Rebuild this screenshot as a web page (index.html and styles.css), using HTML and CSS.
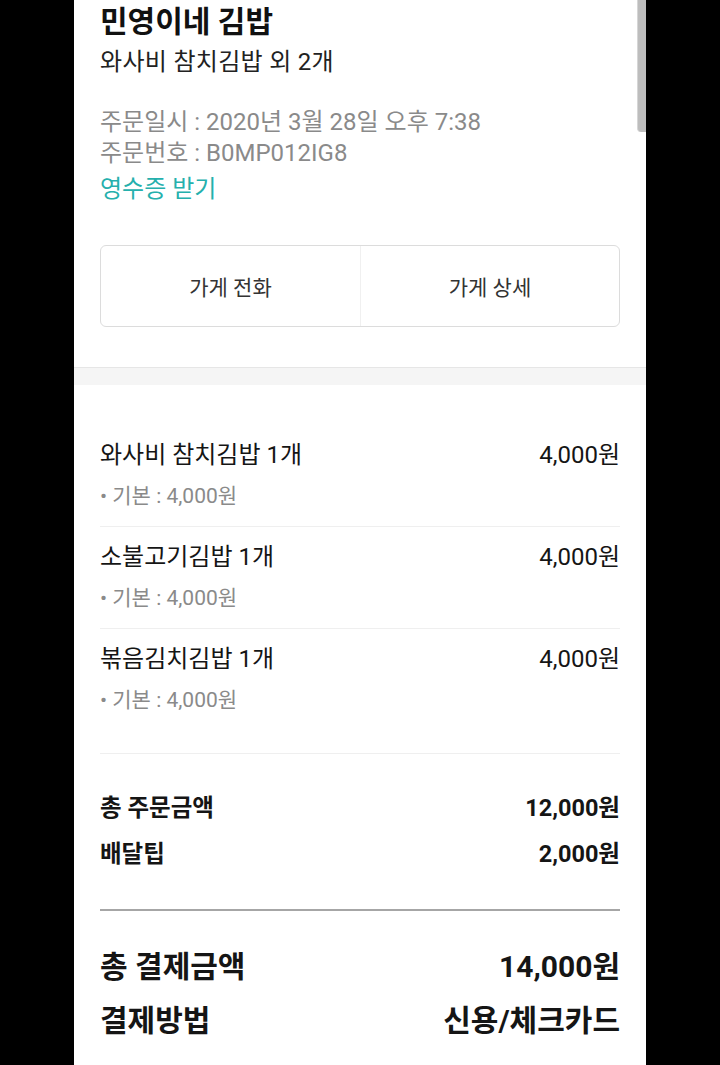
FILE: index.html
```html
<!DOCTYPE html>
<html lang="ko">
<head>
<meta charset="utf-8">
<title>주문 상세</title>
<link rel="stylesheet" href="styles.css">
</head>
<body>
<div class="screen">
  <div class="scrollbar"></div>
  <section class="header">
    <h1 class="store">민영이네 김밥</h1>
    <p class="summary">와사비 참치김밥 외 2개</p>
    <div class="info">
      <p class="info-line">주문일시 : 2020년 3월 28일 오후 7:38</p>
      <p class="info-line">주문번호 : B0MP012IG8</p>
      <p class="receipt">영수증 받기</p>
    </div>
    <div class="actions">
      <div class="action">가게 전화</div>
      <div class="action">가게 상세</div>
    </div>
  </section>
  <div class="gap"></div>
  <section class="items">
    <div class="item">
      <div class="row"><span class="name">와사비 참치김밥 1개</span><span class="price">4,000원</span></div>
      <div class="opt">• 기본 : 4,000원</div>
    </div>
    <div class="item">
      <div class="row"><span class="name">소불고기김밥 1개</span><span class="price">4,000원</span></div>
      <div class="opt">• 기본 : 4,000원</div>
    </div>
    <div class="item last">
      <div class="row"><span class="name">볶음김치김밥 1개</span><span class="price">4,000원</span></div>
      <div class="opt">• 기본 : 4,000원</div>
    </div>
  </section>
  <section class="sums">
    <div class="sum-row"><span>총 주문금액</span><span>12,000원</span></div>
    <div class="sum-row second"><span>배달팁</span><span>2,000원</span></div>
  </section>
  <section class="totals">
    <div class="total-row"><span>총 결제금액</span><span class="amount">14,000원</span></div>
    <div class="total-row second"><span>결제방법</span><span>신용/체크카드</span></div>
  </section>
</div>
</body>
</html>
```
FILE: styles.css
```css
html, body {
  margin: 0;
  padding: 0;
  background: #000;
}
body {
  font-family: Roboto, "Noto Sans CJK KR", sans-serif;
  color: #1a1a1a;
}
p, h1 { margin: 0; }

.screen {
  position: relative;
  width: 572px;
  height: 1065px;
  margin: 0 auto;
  background: #fff;
  overflow: hidden;
}
.scrollbar {
  position: absolute;
  top: 0;
  right: 0;
  width: 8px;
  height: 132px;
  background: #bdbdbd;
  border-left: 1px solid #d6d6d6;
  border-bottom-left-radius: 4px;
}

.header {
  padding: 2px 26px 40px;
}
.store {
  font-size: 30px;
  font-weight: 700;
  line-height: 40px;
  color: #111;
}
.summary {
  font-size: 24px;
  letter-spacing: 0.3px;
  line-height: 40px;
  color: #222;
}
.info {
  margin-top: 25px;
}
.info-line {
  font-size: 24px;
  line-height: 31px;
  color: #8a8a8a;
}
.receipt {
  margin-top: 5px;
  font-size: 24px;
  line-height: 31px;
  color: #25b0ad;
}
.actions {
  margin-top: 40px;
  display: grid;
  grid-template-columns: 1fr 1fr;
  height: 80px;
  border: 1px solid #dcdcdc;
  border-radius: 6px;
}
.action {
  display: flex;
  align-items: center;
  justify-content: center;
  font-size: 21px;
  color: #333;
}
.action + .action {
  border-left: 1px solid #f0f0f0;
}

.gap {
  height: 17px;
  background: #f5f5f5;
  border-top: 1px solid #e6e6e6;
}

.items {
  padding: 40px 26px 0;
}
.item {
  padding: 15px 0;
  border-bottom: 1px solid #efefef;
}
.item.last {
  padding-bottom: 38px;
}
.row {
  display: flex;
  justify-content: space-between;
  font-size: 24px;
  line-height: 30px;
  color: #151515;
}
.opt {
  margin-top: 11px;
  font-size: 21px;
  line-height: 30px;
  color: #8a8a8a;
}

.sums {
  margin: 0 26px;
  padding: 39px 0 40px;
  border-bottom: 2px solid #a6a6a6;
}
.sum-row {
  display: flex;
  justify-content: space-between;
  font-size: 23.5px;
  font-weight: 700;
  line-height: 30px;
  color: #151515;
}
.sum-row.second {
  margin-top: 16px;
}

.totals {
  padding: 36px 26px 0;
}
.total-row {
  display: flex;
  justify-content: space-between;
  font-size: 30px;
  font-weight: 700;
  line-height: 40px;
  color: #151515;
}
.total-row.second {
  margin-top: 14px;
}
```
